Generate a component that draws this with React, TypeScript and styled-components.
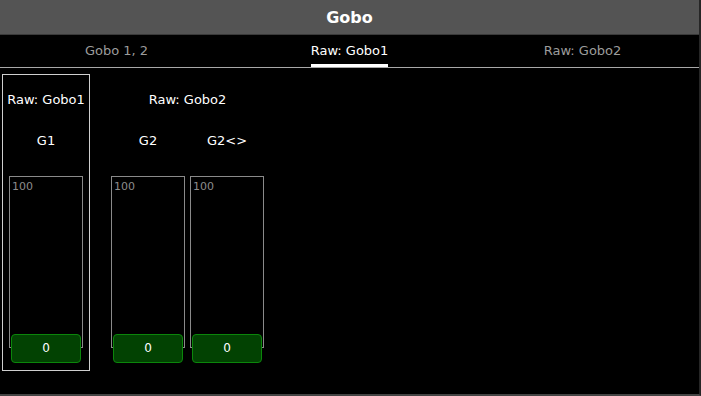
import styled, { createGlobalStyle } from "styled-components";

const Global = createGlobalStyle`
  html, body {
    margin: 0;
    padding: 0;
    background: #000;
    overflow: hidden;
  }
  body {
    font-family: "DejaVu Sans", "Liberation Sans", sans-serif;
    color: #fff;
  }
`;

const Frame = styled.div`
  width: 699px;
  height: 394px;
  display: flex;
  flex-direction: column;
  border-right: 2px solid #262626;
  border-bottom: 2px solid #444;
  background: #000;
`;

const TitleBar = styled.div`
  height: 34px;
  background: #545454;
  border-bottom: 1px solid #3a3a3a;
  display: flex;
  align-items: center;
  justify-content: center;
  font-size: 16px;
  font-weight: bold;
  color: #fff;
`;

const Tabs = styled.div`
  display: flex;
  border-bottom: 1px solid #a8a8a8;
`;

const Tab = styled.div`
  flex: 1;
  display: flex;
  justify-content: center;
`;

const TabLabel = styled.span<{ $active?: boolean }>`
  padding: 8px 0 5px;
  line-height: 16px;
  font-size: 13px;
  color: ${(p) => (p.$active ? "#fff" : "#9c9c9c")};
  border-bottom: 3px solid ${(p) => (p.$active ? "#fff" : "transparent")};
`;

const Content = styled.div`
  flex: 1;
  display: flex;
  align-items: flex-start;
  gap: 14px;
  padding: 6px 0 0 2px;
`;

const Group = styled.div<{ $selected?: boolean }>`
  border: 1px solid ${(p) => (p.$selected ? "#cfcfcf" : "transparent")};
  padding: 0 6px 22px;
  display: flex;
  flex-direction: column;
  align-items: center;
`;

/* names may be wider than the faders below them: they overflow, centred */
const Caption = styled.div<{ $gap: number }>`
  align-self: stretch;
  width: 0;
  min-width: 100%;
  display: flex;
  justify-content: center;
  margin-top: ${(p) => p.$gap}px;
  line-height: 16px;
  font-size: 13px;
  white-space: nowrap;
`;

const Columns = styled.div`
  display: flex;
  gap: 5px;
`;

const Column = styled.div`
  width: 74px;
  display: flex;
  flex-direction: column;
  align-items: center;
`;

const Fader = styled.div`
  position: relative;
  box-sizing: border-box;
  width: 100%;
  height: 172px;
  margin-top: 27px;
  border: 1px solid #8a8a8a;
  padding: 3px 2px;
  font-size: 11px;
  line-height: 13px;
  color: #8c8c8c;
`;

const ValueButton = styled.div`
  position: absolute;
  left: 1px;
  right: 1px;
  bottom: -16px;
  height: 27px;
  border: 1px solid #0b860b;
  border-radius: 4px;
  background: #024202;
  color: #fff;
  font-size: 12px;
  display: flex;
  align-items: center;
  justify-content: center;
`;

const groups = [
  { name: "Raw: Gobo1", selected: true, columns: ["G1"] },
  { name: "Raw: Gobo2", selected: false, columns: ["G2", "G2<>"] },
];

const tabs = ["Gobo 1, 2", "Raw: Gobo1", "Raw: Gobo2"];

export default function App() {
  return (
    <>
      <Global />
      <Frame>
        <TitleBar>Gobo</TitleBar>
        <Tabs>
          {tabs.map((t, i) => (
            <Tab key={t}>
              <TabLabel $active={i === 1}>{t}</TabLabel>
            </Tab>
          ))}
        </Tabs>
        <Content>
          {groups.map((g) => (
            <Group key={g.name} $selected={g.selected}>
              <Caption $gap={17}>{g.name}</Caption>
              <Columns>
                {g.columns.map((c) => (
                  <Column key={c}>
                    <Caption $gap={25}>{c}</Caption>
                    <Fader>
                      100
                      <ValueButton>0</ValueButton>
                    </Fader>
                  </Column>
                ))}
              </Columns>
            </Group>
          ))}
        </Content>
      </Frame>
    </>
  );
}
